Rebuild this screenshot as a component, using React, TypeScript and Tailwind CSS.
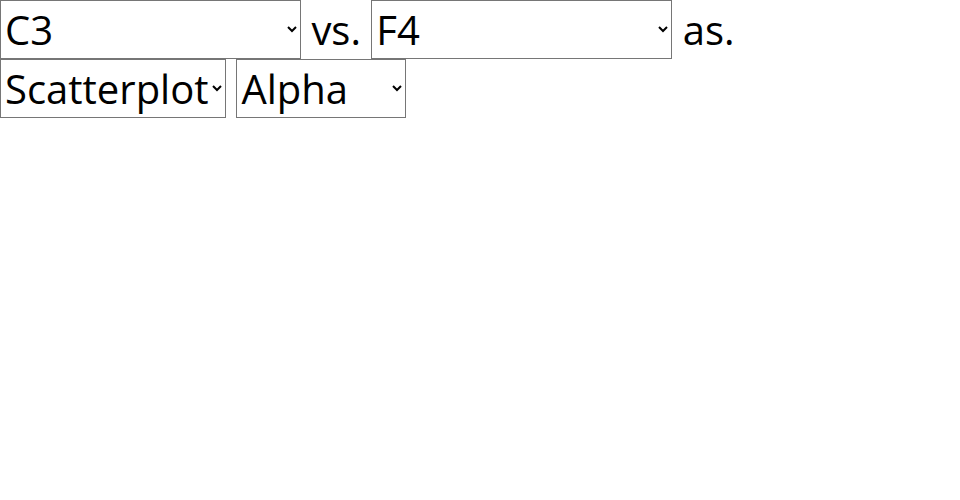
export default function App() {
  return (
    <div className="text-[40px] text-black" style={{ fontFamily: '"Open Sans", sans-serif' }}>
      <div className="h-[59px]">
        <select className="w-[301px] border border-[#767676] bg-white" defaultValue="C3">
          <option>C3</option>
        </select>{" "}
        vs.{" "}
        <select className="w-[301px] border border-[#767676] bg-white" defaultValue="F4">
          <option>F4</option>
        </select>{" "}
        as.
      </div>
      <div>
        <select className="border border-[#767676] bg-white" defaultValue="Scatterplot">
          <option>Scatterplot</option>
        </select>{" "}
        <select className="w-[170px] border border-[#767676] bg-white" defaultValue="Alpha">
          <option>Alpha</option>
        </select>
      </div>
    </div>
  )
}
